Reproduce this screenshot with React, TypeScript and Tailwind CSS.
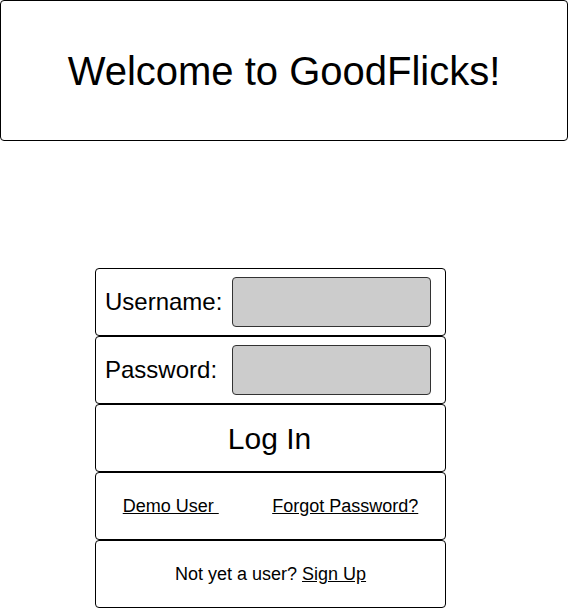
const font = { fontFamily: '"Liberation Sans", Arial, sans-serif' };

function Field({ label, type }: { label: string; type: string }) {
  return (
    <div className="flex h-[68px] items-center rounded border border-black pl-[9px]">
      <label className="w-[127px] text-[24px] text-black">{label}</label>
      <input
        type={type}
        className="h-[50px] w-[199px] rounded border border-[#333] bg-[#cccccc] outline-none"
      />
    </div>
  );
}

export default function App() {
  return (
    <div className="min-h-[609px] bg-white text-black" style={font}>
      <header className="flex h-[141px] items-center justify-center rounded border border-black">
        <h1 className="text-[40px] leading-none">Welcome to GoodFlicks!</h1>
      </header>

      <form className="ml-[95px] mt-[127px] flex w-[351px] flex-col">
        <Field label="Username:" type="text" />
        <Field label="Password:" type="password" />
        <button
          type="button"
          className="flex h-[68px] items-center justify-center rounded border border-black pr-[2px] text-[30px]"
        >
          Log In
        </button>
        <div className="flex h-[68px] items-center justify-around rounded border border-black text-[18px]">
          <a className="underline">Demo User&nbsp;</a>
          <a className="underline">Forgot Password?</a>
        </div>
        <div className="flex h-[68px] items-center justify-center rounded border border-black text-[18px]">
          <span>
            Not yet a user? <a className="underline">Sign Up</a>
          </span>
        </div>
      </form>
    </div>
  );
}
